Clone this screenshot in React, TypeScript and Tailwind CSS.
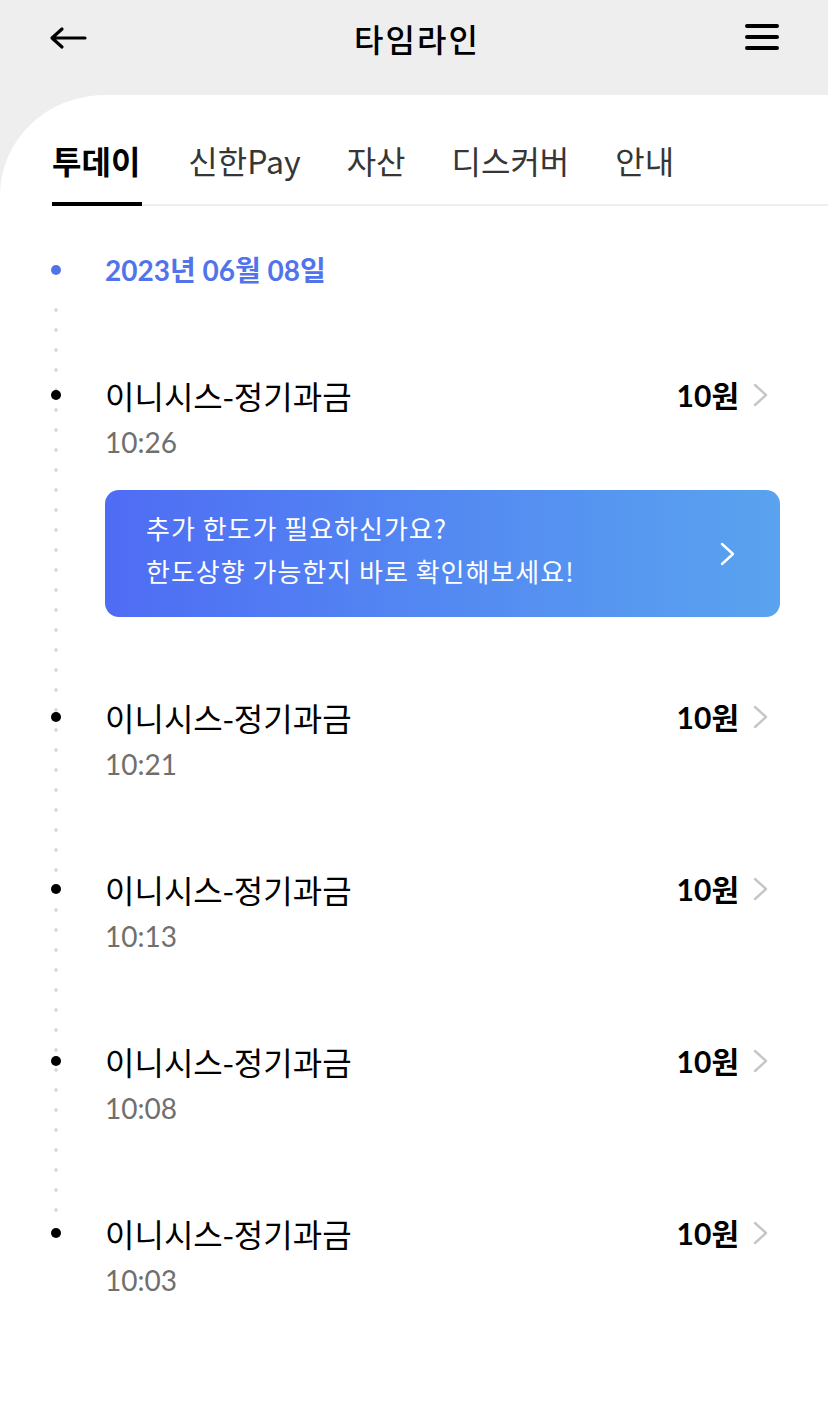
const kr = "font-['Noto_Sans_CJK_KR',sans-serif]";
const num = "font-['Lato','Noto_Sans_CJK_KR',sans-serif]";

const tabs = ["투데이", "신한Pay", "자산", "디스커버", "안내"];

function Chevron({ className }: { className?: string }) {
  return (
    <svg width="16" height="24" viewBox="0 0 16 24" className={className} fill="none">
      <polyline points="2,2 13,12 2,22" stroke="currentColor" strokeWidth="2.4" strokeLinecap="round" strokeLinejoin="round" />
    </svg>
  );
}

function Item({ time }: { time: string }) {
  return (
    <div className="flex items-start">
      <div className="w-[54px] h-[40px] flex items-center shrink-0">
        <span className="w-[10px] h-[10px] rounded-full bg-black" />
      </div>
      <div className="flex-1">
        <div className="flex items-center justify-between h-[40px]">
          <span className={`${kr} text-[32px] text-black leading-[40px]`}>이니시스-정기과금</span>
          <div className="flex items-center pr-[11px]">
            <span className={`${num} text-[30px] font-bold text-black`}>10원</span>
            <Chevron className="ml-[14px] text-[#c6c6c6]" />
          </div>
        </div>
        <div className={`${num} mt-[7px] text-[28px] leading-[40px] text-[#6f6f6f]`}>{time}</div>
      </div>
    </div>
  );
}

export default function App() {
  return (
    <main className="h-[1401px] flex flex-col bg-[#eeeeee] overflow-hidden">
      {/* Header */}
      <header className="h-[75px] px-[48px] flex items-center justify-between shrink-0">
        <svg width="40" height="24" viewBox="0 0 40 24" fill="none">
          <path d="M4 12 H37 M14 3 L4 12 L14 21" stroke="black" strokeWidth="3.2" strokeLinecap="round" strokeLinejoin="round" />
        </svg>
        <h1 className={`${kr} text-[32px] font-medium tracking-[2px] pl-[2px] text-black`}>타임라인</h1>
        <svg width="36" height="30" viewBox="0 0 36 30" fill="none">
          <path d="M3 3 H33 M3 14 H33 M3 25 H33" stroke="black" strokeWidth="4" strokeLinecap="round" />
        </svg>
      </header>

      {/* Panel */}
      <section className="mt-[20px] flex-1 bg-white rounded-tl-[105px_100px]">
        {/* Tabs */}
        <nav className="ml-[52px] pt-[45px] flex items-end gap-[46px] border-b-2 border-[#eeeeee]">
          {tabs.map((t, i) => (
            <div
              key={t}
              className={`${kr} -mb-[2px] pb-[22px] text-[32px] leading-[40px] border-b-4 ${
                i === 0 ? "border-black font-bold text-black pr-[2px]" : "border-transparent text-[#363636]"
              }`}
            >
              {t}
            </div>
          ))}
        </nav>

        {/* Timeline */}
        <div className="relative mt-[44px] pl-[51px] pr-[48px]">
          <div className="absolute left-[53px] top-[50px] bottom-[85px] w-[6px] bg-[radial-gradient(circle,#d9d9d9_1.5px,transparent_2px)] bg-[length:6px_20px]" />

          <div className="relative flex items-center h-[40px]">
            <div className="w-[54px] flex items-center">
              <span className="w-[10px] h-[10px] rounded-full bg-[#5274ea]" />
            </div>
            <span className={`${num} text-[28px] font-bold text-[#5274ea]`}>2023년 06월 08일</span>
          </div>

          <div className="relative mt-[85px]">
            <Item time="10:26" />
          </div>

          <div className="relative ml-[54px] mt-[28px] h-[127px] rounded-[14px] bg-gradient-to-r from-[#4f6cf4] to-[#5aa3ef] flex items-center justify-between pl-[41px] pr-[44px]">
            <p className={`${kr} mb-[10px] text-[26px] tracking-[1px] leading-[43px] text-white`}>
              추가 한도가 필요하신가요?
              <br />
              한도상향 가능한지 바로 확인해보세요!
            </p>
            <Chevron className="text-white" />
          </div>

          <div className="relative mt-[80px] flex flex-col gap-[85px]">
            <Item time="10:21" />
            <Item time="10:13" />
            <Item time="10:08" />
            <Item time="10:03" />
          </div>
        </div>
      </section>
    </main>
  );
}
